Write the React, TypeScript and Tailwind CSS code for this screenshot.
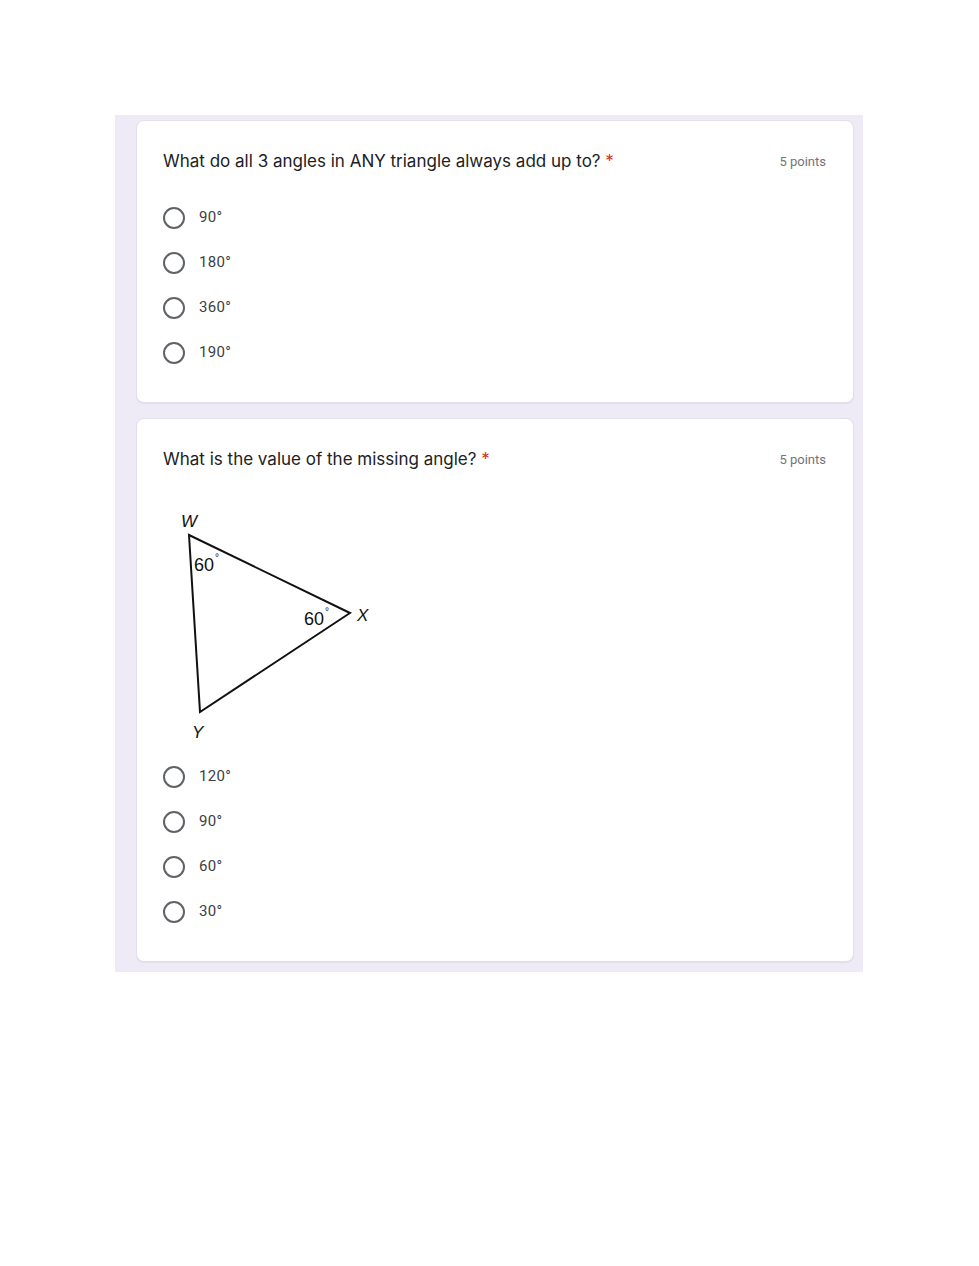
import React from 'react'

interface Question {
  title: string
  points: string
  options: string[]
  figure?: boolean
}

const questions: Question[] = [
  {
    title: 'What do all 3 angles in ANY triangle always add up to?',
    points: '5 points',
    options: ['90°', '180°', '360°', '190°'],
  },
  {
    title: 'What is the value of the missing angle?',
    points: '5 points',
    options: ['120°', '90°', '60°', '30°'],
    figure: true,
  },
]

const Triangle = () => (
  <svg width="220" height="242" viewBox="0 0 220 242" className="block">
    <polygon points="18,30 179,108 29,207" fill="none" stroke="#111" strokeWidth="2" strokeLinejoin="miter" />
    <g fontFamily="'Liberation Sans', Arial, sans-serif" fill="#111">
      <text x="10" y="22" fontSize="17" fontStyle="italic">W</text>
      <text x="186" y="116" fontSize="17" fontStyle="italic">X</text>
      <text x="21" y="233" fontSize="17" fontStyle="italic">Y</text>
      <text x="23" y="66" fontSize="18">60</text>
      <text x="44" y="56" fontSize="10">°</text>
      <text x="133" y="120" fontSize="18">60</text>
      <text x="154" y="110" fontSize="10">°</text>
    </g>
  </svg>
)

const Radio = ({ label }: { label: string }) => (
  <div className="flex items-center h-[45px]">
    <span className="w-[22px] h-[22px] rounded-full border-2 border-[#5f6368] shrink-0" />
    <span className="ml-[14px] text-[15px] tracking-[0.3px] text-[#3c4043]">{label}</span>
  </div>
)

const QuestionCard = ({ q }: { q: Question }) => (
  <div className="bg-white rounded-lg border border-[#e3e0ea] shadow-[0_1px_1px_rgba(0,0,0,0.06)] px-[26px] pt-[28px] pb-[27px]">
    <div className="flex justify-between items-start">
      <div className="text-[17px] leading-6 text-[#202124]" style={{ fontFamily: "Inter, 'Open Sans', sans-serif" }}>
        {q.title} <span className="text-[#d93025]">*</span>
      </div>
      <div className="text-[13px] leading-6 text-[#70757a] mr-[1px] pt-[1px]">{q.points}</div>
    </div>
    {q.figure && (
      <div className="mt-[33px] ml-[8px] mb-[7px]">
        <Triangle />
      </div>
    )}
    <div className={q.figure ? 'mt-0' : 'mt-[21px]'}>
      {q.options.map((o) => (
        <Radio key={o} label={o} />
      ))}
    </div>
  </div>
)

export default function App() {
  return (
    <div className="w-[979px] h-[1266px] bg-white pt-[115px]" style={{ fontFamily: "Roboto, 'Liberation Sans', Arial, sans-serif" }}>
      <div className="ml-[115px] w-[748px] bg-[#efebf6] pt-[5px] pb-[10px] pl-[21px] pr-[9px] flex flex-col gap-[15px]">
        {questions.map((q) => (
          <QuestionCard key={q.title} q={q} />
        ))}
      </div>
    </div>
  )
}
